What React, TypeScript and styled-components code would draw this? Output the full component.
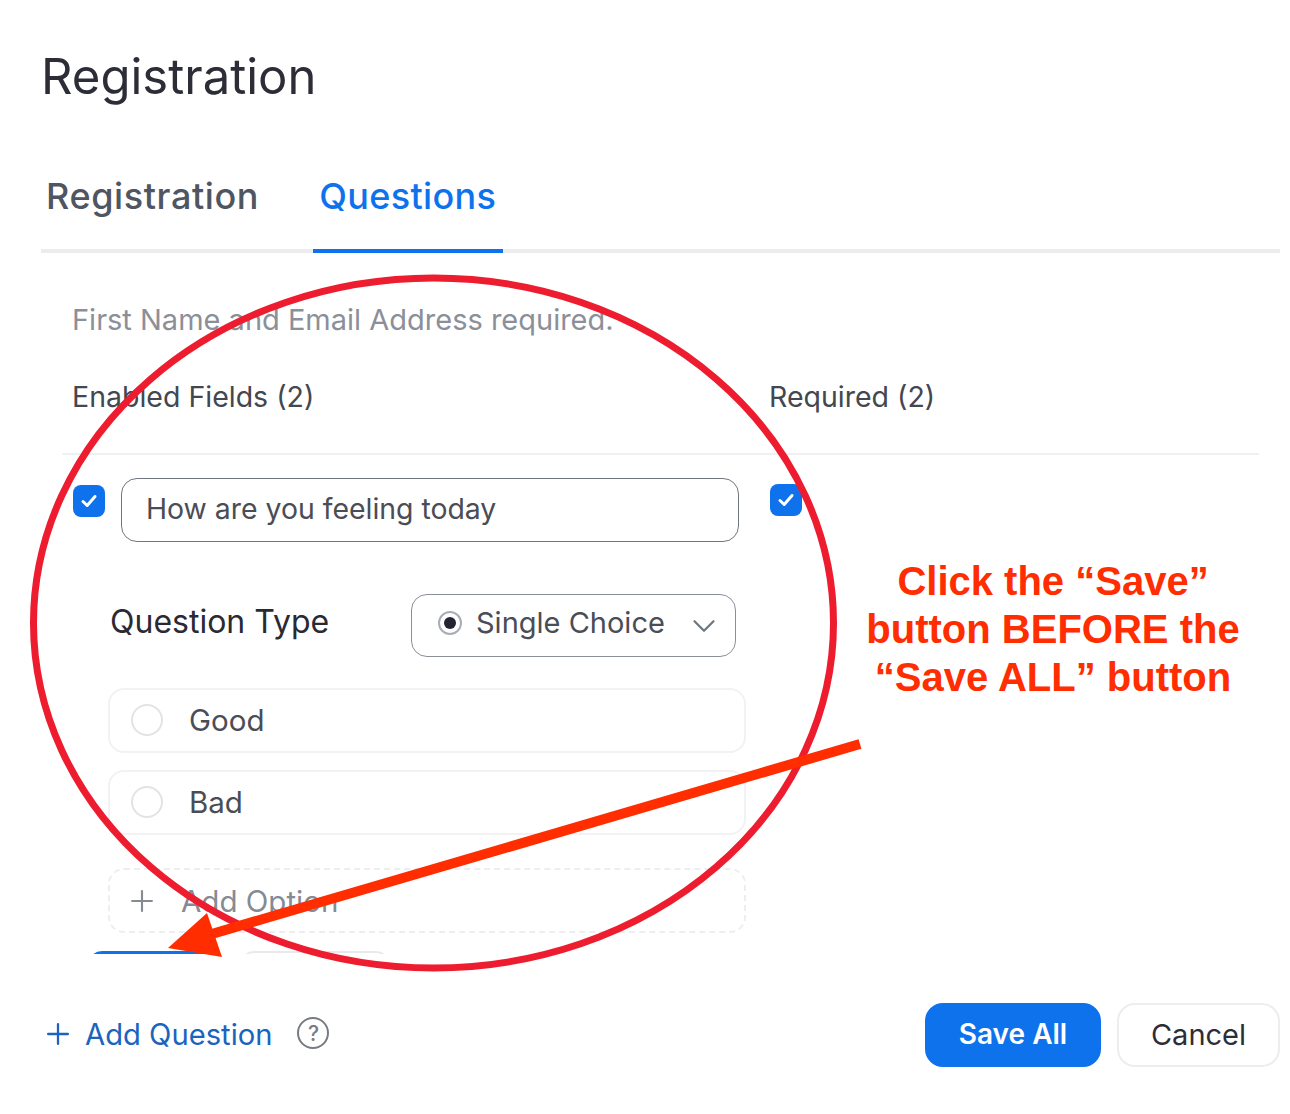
import * as React from "react";
import styled, { createGlobalStyle } from "styled-components";
import { ChevronDown, Plus } from "lucide-react";

const GlobalStyle = createGlobalStyle`
  html, body {
    margin: 0;
    padding: 0;
    background: #fff;
  }
  * {
    box-sizing: border-box;
  }
`;

const Page = styled.div`
  position: relative;
  width: 1290px;
  height: 1114px;
  overflow: hidden;
  padding: 46px 10px 0 41px;
  font-family: Inter, "Liberation Sans", sans-serif;
  color: #232333;
`;

const Title = styled.h1`
  margin: 0;
  height: 62px;
  font-size: 49px;
  line-height: 62px;
  font-weight: 400;
  color: #2d2d38;
`;

const Tabs = styled.div`
  display: flex;
  height: 101px;
  margin-top: 44px;
  border-bottom: 4px solid #ececef;
`;

const Tab = styled.div<{ $active?: boolean }>`
  height: 101px;
  padding: ${(p) => (p.$active ? "0 7px 0 6px" : "0 6px 0 5px")};
  margin-right: ${(p) => (p.$active ? 0 : "48px")};
  font-size: 36px;
  letter-spacing: ${(p) => (p.$active ? "0.35px" : "0.6px")};
  line-height: 88px;
  font-weight: 500;
  color: ${(p) => (p.$active ? "#0e72ed" : "#4f5561")};
  border-bottom: ${(p) => (p.$active ? "4px solid #0e72ed" : "none")};
`;

const Body = styled.div`
  height: 701px;
  overflow: hidden;
  padding: 49px 21px 0 21px;
`;

const Hint = styled.div`
  height: 36px;
  margin-left: 10px;
  font-size: 29px;
  line-height: 36px;
  color: #8b8f99;
`;

const FieldHeader = styled.div`
  display: flex;
  height: 117px;
  padding: 41px 0 0 10px;
  border-bottom: 2px solid #f0f0f3;
  font-size: 28.5px;
  line-height: 36px;
  color: #43474f;
`;

const EnabledLabel = styled.div`
  width: 697px;
`;

const QuestionRow = styled.div`
  display: flex;
  align-items: flex-start;
  margin-top: 23px;
  padding-left: 11px;
`;

const CheckBox = styled.div<{ $raised?: boolean }>`
  display: flex;
  align-items: center;
  justify-content: center;
  flex: none;
  width: 32px;
  height: 32px;
  margin-top: ${(p) => (p.$raised ? "6px" : "7px")};
  border-radius: 8px;
  background: #0e72ed;
`;

const QuestionInput = styled.div`
  width: 618px;
  height: 64px;
  margin: 0 31px 0 16px;
  padding-left: 24px;
  border: 1.5px solid #6e7680;
  border-radius: 16px;
  font-size: 28.4px;
  line-height: 60px;
  color: #4a4d55;
`;

const TypeRow = styled.div`
  display: flex;
  align-items: center;
  margin-top: 52px;
  padding-left: 48px;
`;

const TypeLabel = styled.div`
  width: 301px;
  padding-bottom: 8px;
  font-size: 32px;
  line-height: 40px;
  color: #2a2a33;
`;

const TypeSelect = styled.div`
  display: flex;
  align-items: center;
  width: 325px;
  height: 63px;
  padding: 0 12px 0 26px;
  border: 1.5px solid #8a8f99;
  border-radius: 16px;
  font-size: 29px;
  color: #4a4d55;
`;

const SelectText = styled.span`
  flex: 1;
  margin: 0 0 6px 14px;
`;

const RadioMark = styled.span`
  display: flex;
  align-items: center;
  justify-content: center;
  width: 24px;
  height: 24px;
  margin-bottom: 5px;
  border: 2px solid #a9adb5;
  border-radius: 50%;
  &::after {
    content: "";
    width: 12px;
    height: 12px;
    border-radius: 50%;
    background: #232333;
  }
`;

const OptionList = styled.div`
  display: flex;
  flex-direction: column;
  gap: 17px;
  width: 638px;
  margin: 31px 0 0 46px;
`;

const OptionCard = styled.div<{ $dashed?: boolean }>`
  display: flex;
  align-items: center;
  height: 65px;
  margin-top: ${(p) => (p.$dashed ? "16px" : 0)};
  padding-left: ${(p) => (p.$dashed ? "15px" : "21px")};
  padding-bottom: ${(p) => (p.$dashed ? 0 : "2px")};
  border: 2px ${(p) => (p.$dashed ? "dashed #eeeef1" : "solid #f2f2f5")};
  border-radius: 16px;
  font-size: 29.5px;
  color: ${(p) => (p.$dashed ? "#868a93" : "#4a4d55")};
`;

const OptionRadio = styled.span`
  width: 32px;
  height: 32px;
  margin-right: 26px;
  border: 2px solid #e2e3e7;
  border-radius: 50%;
`;

const AddIcon = styled.span`
  display: flex;
  margin-right: 22px;
  color: #868a93;
`;

const SaveRow = styled.div`
  display: flex;
  gap: 16px;
  margin: 18px 0 0 26px;
`;

const SmallButton = styled.div<{ $primary?: boolean }>`
  width: ${(p) => (p.$primary ? "136px" : "150px")};
  height: 60px;
  border-radius: 14px;
  border: 2px solid ${(p) => (p.$primary ? "#0e72ed" : "#e9e9ed")};
  background: ${(p) => (p.$primary ? "#0e72ed" : "#fff")};
`;

const Footer = styled.div`
  display: flex;
  align-items: center;
  height: 64px;
  margin-top: 49px;
`;

const AddQuestion = styled.div`
  display: flex;
  align-items: center;
  padding-bottom: 2px;
  color: #1a64bd;
  font-size: 29.2px;
  font-weight: 400;
`;

const AddQuestionLabel = styled.span`
  margin-left: 10px;
`;

const HelpIcon = styled.span`
  display: flex;
  align-items: center;
  justify-content: center;
  width: 32px;
  height: 32px;
  margin: 0 0 4px 25px;
  border: 2.5px solid #777b84;
  border-radius: 50%;
  font-size: 21px;
  font-weight: 500;
  color: #777b84;
`;

const FooterButtons = styled.div`
  display: flex;
  gap: 16px;
  margin-left: auto;
`;

const FooterButton = styled.div<{ $primary?: boolean }>`
  display: flex;
  align-items: center;
  justify-content: center;
  width: ${(p) => (p.$primary ? "176px" : "163px")};
  height: 64px;
  padding-bottom: 2px;
  border-radius: 18px;
  border: 2px solid ${(p) => (p.$primary ? "#0e72ed" : "#ededf0")};
  background: ${(p) => (p.$primary ? "#0e72ed" : "#fff")};
  color: ${(p) => (p.$primary ? "#fff" : "#2d2d38")};
  font-size: ${(p) => (p.$primary ? "28px" : "29px")};
  font-weight: ${(p) => (p.$primary ? 600 : 400)};
`;

const Markup = styled.svg`
  position: absolute;
  top: 0;
  left: 0;
  pointer-events: none;
`;

const Note = styled.div`
  position: absolute;
  top: 557px;
  left: 853px;
  width: 400px;
  font-family: "Liberation Sans", Arial, sans-serif;
  font-size: 40px;
  line-height: 48px;
  font-weight: 700;
  text-align: center;
  color: #ff2d00;
`;

const Check = () => (
  <svg width="22" height="22" viewBox="0 0 22 22" fill="none">
    <path
      d="M5 11.5 L9.2 15.5 L17 6.5"
      stroke="#fff"
      strokeWidth="3"
      strokeLinecap="round"
      strokeLinejoin="round"
    />
  </svg>
);

function App() {
  return (
    <Page>
      <GlobalStyle />
      <Title>Registration</Title>
      <Tabs>
        <Tab>Registration</Tab>
        <Tab $active>Questions</Tab>
      </Tabs>
      <Body>
        <Hint>First Name and Email Address required.</Hint>
        <FieldHeader>
          <EnabledLabel>Enabled Fields (2)</EnabledLabel>
          <div>Required (2)</div>
        </FieldHeader>
        <QuestionRow>
          <CheckBox>
            <Check />
          </CheckBox>
          <QuestionInput>How are you feeling today</QuestionInput>
          <CheckBox $raised>
            <Check />
          </CheckBox>
        </QuestionRow>
        <TypeRow>
          <TypeLabel>Question Type</TypeLabel>
          <TypeSelect>
            <RadioMark />
            <SelectText>Single Choice</SelectText>
            <ChevronDown size={38} color="#6e7680" strokeWidth={1.4} />
          </TypeSelect>
        </TypeRow>
        <OptionList>
          <OptionCard>
            <OptionRadio />
            Good
          </OptionCard>
          <OptionCard>
            <OptionRadio />
            Bad
          </OptionCard>
          <OptionCard $dashed>
            <AddIcon>
              <Plus size={34} strokeWidth={1.5} />
            </AddIcon>
            Add Option
          </OptionCard>
        </OptionList>
        <SaveRow>
          <SmallButton $primary />
          <SmallButton />
        </SaveRow>
      </Body>
      <Footer>
        <AddQuestion>
          <Plus size={34} strokeWidth={1.6} />
          <AddQuestionLabel>Add Question</AddQuestionLabel>
        </AddQuestion>
        <HelpIcon>?</HelpIcon>
        <FooterButtons>
          <FooterButton $primary>Save All</FooterButton>
          <FooterButton>Cancel</FooterButton>
        </FooterButtons>
      </Footer>
      <Markup width="1290" height="1114" viewBox="0 0 1290 1114" fill="none">
        <ellipse cx="433.5" cy="623" rx="400" ry="345" stroke="#ed1c2e" strokeWidth="7" />
        <line x1="860" y1="744" x2="205" y2="936" stroke="#ff2d00" strokeWidth="10" />
        <polygon points="168,948 207,913 222,957" fill="#ff2d00" />
      </Markup>
      <Note>
        Click the “Save”
        <br />
        button BEFORE the
        <br />
        “Save ALL” button
      </Note>
    </Page>
  );
}

export default App;
